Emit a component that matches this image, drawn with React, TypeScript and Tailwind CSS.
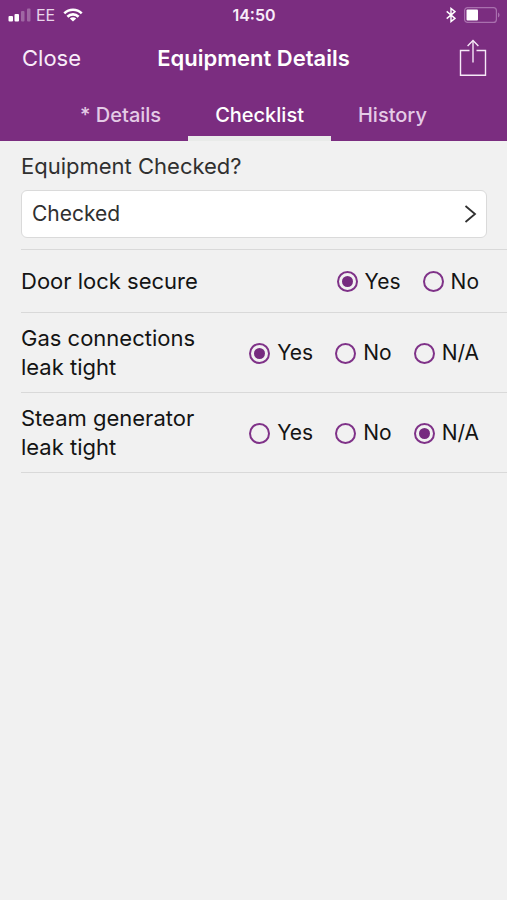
import { useState } from "react";

type Answer = "Yes" | "No" | "N/A";

interface Question {
  id: string;
  label: string;
  options: Answer[];
  initial: Answer;
}

const questions: Question[] = [
  { id: "door-lock", label: "Door lock secure", options: ["Yes", "No"], initial: "Yes" },
  { id: "gas", label: "Gas connections leak tight", options: ["Yes", "No", "N/A"], initial: "Yes" },
  { id: "steam", label: "Steam generator leak tight", options: ["Yes", "No", "N/A"], initial: "N/A" },
];

const tabs = ["* Details", "Checklist", "History"];

function SignalIcon() {
  return (
    <svg width="24" height="14" viewBox="0 0 24 14" fill="#ffffff" aria-hidden="true">
      <rect x="0.5" y="8" width="4.5" height="5.5" rx="1" />
      <rect x="6.5" y="6" width="4.5" height="7.5" rx="1" />
      <rect x="13" y="3" width="3.5" height="10.5" rx="1" opacity="0.28" />
      <rect x="19" y="0.5" width="3.5" height="13" rx="1" opacity="0.28" />
    </svg>
  );
}

function WifiIcon() {
  return (
    <svg width="20" height="14" viewBox="0 0 20 14" fill="none" stroke="#ffffff" strokeWidth="2.6" aria-hidden="true">
      <path d="M1.3 5.4C6.2 0.6 13.8 0.6 18.7 5.4" />
      <path d="M4.4 8.7C7.6 5.6 12.4 5.6 15.6 8.7" />
      <path d="M10 13.6L6.8 10.5C8.6 8.8 11.4 8.8 13.2 10.5Z" fill="#ffffff" stroke="none" />
    </svg>
  );
}

function BluetoothIcon() {
  return (
    <svg width="10" height="16" viewBox="0 0 10 16" fill="none" stroke="#ffffff" strokeWidth="1.4" aria-hidden="true">
      <path d="M0.7 4.4L9 11.4L5 14.6V1.4L9 4.6L0.7 11.6" />
    </svg>
  );
}

function BatteryIcon() {
  return (
    <svg width="36" height="16" viewBox="0 0 36 16" fill="none" aria-hidden="true">
      <rect x="0.6" y="0.6" width="31.8" height="14.8" rx="3" stroke="#a970ae" strokeWidth="1.2" />
      <rect x="2.5" y="2.5" width="11.5" height="11" rx="1" fill="#ffffff" />
      <path d="M34 5.5C36 6.2 36 9.8 34 10.5Z" fill="#a970ae" />
    </svg>
  );
}

function ShareIcon() {
  return (
    <svg width="28" height="38" viewBox="0 0 28 38" fill="none" stroke="#f6e9f7" strokeWidth="1.4" aria-hidden="true">
      <path d="M10.5 11.5H1.5V36.2H26.5V11.5H17.5" />
      <path d="M14 23.5V1.8" />
      <path d="M8.6 7L14 1.6L19.4 7" />
    </svg>
  );
}

function QuestionRow({ question }: { question: Question }) {
  const [value, setValue] = useState<Answer>(question.initial);
  return (
    <div
      role="radiogroup"
      aria-labelledby={question.id}
      className="ml-[21px] flex items-center justify-between border-b border-[#d9d9d9] pb-[10px] pr-7 pt-[11px]"
    >
      <div id={question.id} className="flex min-h-[41px] max-w-[190px] items-center leading-[29px]">
        {question.label}
      </div>
      <div className="flex gap-[22px] text-[21px]">
        {question.options.map((option) => (
          <label key={option} className="flex items-center gap-[7px]">
            <input
              type="radio"
              name={question.id}
              value={option}
              checked={value === option}
              onChange={() => setValue(option)}
              className="m-0 grid size-[21px] appearance-none place-items-center rounded-full border-2 border-[#7f3288] before:size-[11px] before:rounded-full before:content-[''] checked:before:bg-[#762b7f]"
            />
            {option}
          </label>
        ))}
      </div>
    </div>
  );
}

export default function App() {
  const [tab, setTab] = useState("Checklist");
  const [status, setStatus] = useState("Checked");

  return (
    <div className="min-h-screen bg-[#f1f1f1] font-[Inter,sans-serif] text-[22px] text-[#141414]">
      <header className="bg-[#7b2d80] text-[#f8ecf9]">
        <div className="grid h-[30px] grid-cols-[1fr_auto_1fr] items-center pl-2 pr-[7px] text-base leading-5">
          <div className="flex items-center">
            <SignalIcon />
            <span className="ml-1 mr-2 text-[#e9d5eb]">EE</span>
            <WifiIcon />
          </div>
          <span className="font-semibold">14:50</span>
          <div className="flex items-center justify-end gap-2">
            <BluetoothIcon />
            <BatteryIcon />
          </div>
        </div>
        <div className="grid h-14 grid-cols-[1fr_auto_1fr] items-center px-5">
          <button type="button" className="justify-self-start pl-[2px]">Close</button>
          <h1 className="font-semibold text-white">Equipment Details</h1>
          <button type="button" aria-label="Share" className="justify-self-end">
            <ShareIcon />
          </button>
        </div>
        <nav role="tablist" className="flex h-[55px] justify-center text-xl">
          {tabs.map((name) => (
            <button
              key={name}
              type="button"
              role="tab"
              aria-selected={tab === name}
              onClick={() => setTab(name)}
              className="border-b-[5px] border-transparent px-[27px] pb-0 pt-2 font-medium text-[#e4cbe6] aria-selected:border-[#e9ebe9] aria-selected:text-white"
            >
              {name}
            </button>
          ))}
        </nav>
      </header>

      <main>
        <div className="ml-[21px] border-b border-[#d9d9d9] pb-[11px] pr-5 pt-[9px] text-[#303030]">
          <label htmlFor="status" className="block leading-8">
            Equipment Checked?
          </label>
          <div className="mt-2 grid items-center">
            <select
              id="status"
              value={status}
              onChange={(event) => setStatus(event.target.value)}
              className="col-start-1 row-start-1 h-12 w-full appearance-none rounded-md border border-[#dadada] bg-white px-[10px] text-[21px]"
            >
              <option>Checked</option>
              <option>Not Checked</option>
            </select>
            <svg
              className="pointer-events-none col-start-1 row-start-1 mr-[10px] justify-self-end"
              width="14"
              height="18"
              viewBox="0 0 14 18"
              fill="none"
              stroke="#303030"
              strokeWidth="1.8"
              aria-hidden="true"
            >
              <path d="M2.5 1L12 9L2.5 17" />
            </svg>
          </div>
        </div>
        {questions.map((question) => (
          <QuestionRow key={question.id} question={question} />
        ))}
      </main>
    </div>
  );
}
